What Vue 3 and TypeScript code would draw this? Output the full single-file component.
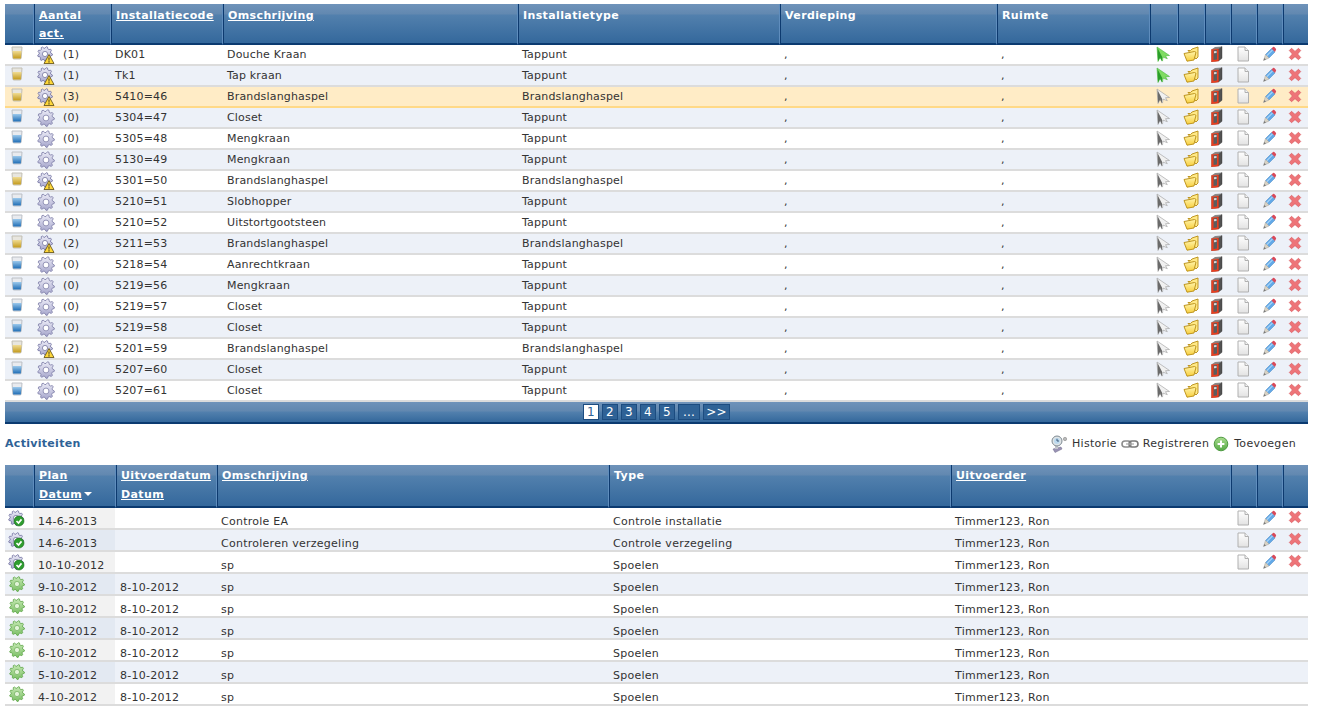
<script setup lang="ts">
interface InstRow { state: 'warn' | 'ok'; count: number; code: string; name: string; type: string; active?: boolean; selected?: boolean }
interface ActRow { done: boolean; plan: string; exec: string; name: string; type: string }

const instCols = [28, 77, 112, 295, 262, 217, 153, 28, 27, 26, 26, 26, 26]
const actCols = [28, 82, 101, 392, 342, 280, 26, 26, 26]

const T = 'Tappunt'
const B = 'Brandslanghaspel'
const installations: InstRow[] = [
  { state: 'warn', count: 1, code: 'DK01', name: 'Douche Kraan', type: T, active: true },
  { state: 'warn', count: 1, code: 'Tk1', name: 'Tap kraan', type: T, active: true },
  { state: 'warn', count: 3, code: '5410=46', name: B, type: B, selected: true },
  { state: 'ok', count: 0, code: '5304=47', name: 'Closet', type: T },
  { state: 'ok', count: 0, code: '5305=48', name: 'Mengkraan', type: T },
  { state: 'ok', count: 0, code: '5130=49', name: 'Mengkraan', type: T },
  { state: 'warn', count: 2, code: '5301=50', name: B, type: B },
  { state: 'ok', count: 0, code: '5210=51', name: 'Slobhopper', type: T },
  { state: 'ok', count: 0, code: '5210=52', name: 'Uitstortgootsteen', type: T },
  { state: 'warn', count: 2, code: '5211=53', name: B, type: B },
  { state: 'ok', count: 0, code: '5218=54', name: 'Aanrechtkraan', type: T },
  { state: 'ok', count: 0, code: '5219=56', name: 'Mengkraan', type: T },
  { state: 'ok', count: 0, code: '5219=57', name: 'Closet', type: T },
  { state: 'ok', count: 0, code: '5219=58', name: 'Closet', type: T },
  { state: 'warn', count: 2, code: '5201=59', name: B, type: B },
  { state: 'ok', count: 0, code: '5207=60', name: 'Closet', type: T },
  { state: 'ok', count: 0, code: '5207=61', name: 'Closet', type: T },
]

const activities: ActRow[] = [
  { done: false, plan: '14-6-2013', exec: '', name: 'Controle EA', type: 'Controle installatie' },
  { done: false, plan: '14-6-2013', exec: '', name: 'Controleren verzegeling', type: 'Controle verzegeling' },
  { done: false, plan: '10-10-2012', exec: '', name: 'sp', type: 'Spoelen' },
  { done: true, plan: '9-10-2012', exec: '8-10-2012', name: 'sp', type: 'Spoelen' },
  { done: true, plan: '8-10-2012', exec: '8-10-2012', name: 'sp', type: 'Spoelen' },
  { done: true, plan: '7-10-2012', exec: '8-10-2012', name: 'sp', type: 'Spoelen' },
  { done: true, plan: '6-10-2012', exec: '8-10-2012', name: 'sp', type: 'Spoelen' },
  { done: true, plan: '5-10-2012', exec: '8-10-2012', name: 'sp', type: 'Spoelen' },
  { done: true, plan: '4-10-2012', exec: '8-10-2012', name: 'sp', type: 'Spoelen' },
]

const pages = ['2', '3', '4', '5', '...', '>>']

function gearPath(cx: number, cy: number, outer: number, inner: number, teeth: number) {
  const pts: string[] = []
  for (let i = 0; i < teeth * 4; i++) {
    const a = (i / (teeth * 4)) * Math.PI * 2
    const r = i % 4 < 2 ? outer : inner
    pts.push(`${(cx + r * Math.cos(a)).toFixed(2)} ${(cy + r * Math.sin(a)).toFixed(2)}`)
  }
  return 'M' + pts.join('L') + 'Z'
}
const gear = gearPath(8, 8, 7.4, 5.8, 9)
</script>

<template>
  <div class="page">
    <svg class="sprite" width="0" height="0">
      <defs>
        <linearGradient id="gr-gear" x1="0" y1="0" x2="0" y2="1"><stop offset="0" stop-color="#ececf7" /><stop offset="1" stop-color="#a6a6cc" /></linearGradient>
        <linearGradient id="gr-green" x1="0" y1="0" x2="0" y2="1"><stop offset="0" stop-color="#c4e8b2" /><stop offset="1" stop-color="#7cc066" /></linearGradient>
        <linearGradient id="gr-folder" x1="0" y1="0" x2="0" y2="1"><stop offset="0" stop-color="#fff3a8" /><stop offset="1" stop-color="#f8cf3e" /></linearGradient>
        <linearGradient id="gr-doc" x1="0" y1="0" x2="0" y2="1"><stop offset="0" stop-color="#ffffff" /><stop offset="1" stop-color="#e2e2e2" /></linearGradient>
        <linearGradient id="gr-plus" x1="0" y1="0" x2="0" y2="1"><stop offset="0" stop-color="#a9dd8e" /><stop offset="1" stop-color="#55a845" /></linearGradient>
        <linearGradient id="gr-beer" x1="0" y1="0" x2="0" y2="1"><stop offset="0" stop-color="#f0dc94" /><stop offset="1" stop-color="#c39a1c" /></linearGradient>
        <linearGradient id="gr-water" x1="0" y1="0" x2="0" y2="1"><stop offset="0" stop-color="#9cc9ec" /><stop offset="1" stop-color="#1f6db5" /></linearGradient>
        <symbol id="i-glass-y" viewBox="0 0 12 14">
          <path d="M1 1h10l-.8 11a1.200 1.200 0 0 1-1.200 1H3a1.200 1.200 0 0 1-1.200-1z" fill="#e8e6df" stroke="#c2bfb4" />
          <path d="M1.500 5h9l-.7 7.500H2.200z" fill="url(#gr-beer)" />
        </symbol>
        <symbol id="i-glass-b" viewBox="0 0 12 14">
          <path d="M1 1h10l-.8 11a1.200 1.200 0 0 1-1.200 1H3a1.200 1.200 0 0 1-1.200-1z" fill="#e9ebef" stroke="#bcc0c6" />
          <path d="M1.500 5h9l-.7 7.500H2.200z" fill="url(#gr-water)" />
        </symbol>
        <symbol id="i-gear" viewBox="0 0 16 16">
          <path :d="gear" fill="url(#gr-gear)" stroke="#8585ad" stroke-width=".8" />
          <circle cx="8" cy="8" r="2.600" fill="#fff" stroke="#8a8ab0" stroke-width=".8" />
        </symbol>
        <symbol id="i-gear-warn" viewBox="0 0 18 18">
          <path :d="gear" fill="url(#gr-gear)" stroke="#7070a0" stroke-width=".8" />
          <circle cx="8" cy="8" r="2.600" fill="#fff" stroke="#7878a0" stroke-width=".8" />
          <path d="M12 8.500l5 9H7z" fill="#ffd83a" stroke="#5a4a10" stroke-width=".8" stroke-linejoin="round" />
          <path d="M11.500 11.500h1l-.2 3.200h-.6zM11.500 15.300h1v1.200h-1z" fill="#222" />
        </symbol>
        <symbol id="i-gear-check" viewBox="0 0 18 18">
          <path :d="gear" fill="url(#gr-gear)" stroke="#7070a0" stroke-width=".8" />
          <circle cx="8" cy="8" r="2.600" fill="#fff" stroke="#7878a0" stroke-width=".8" />
          <circle cx="11" cy="11" r="5" fill="#2f9e2f" stroke="#14661a" stroke-width=".6" />
          <path d="M8.500 11l2 2 3-3.600" fill="none" stroke="#fff" stroke-width="1.700" />
        </symbol>
        <symbol id="i-gear-green" viewBox="0 0 16 16">
          <path :d="gear" fill="url(#gr-green)" stroke="#5da548" stroke-width=".8" />
          <circle cx="8" cy="8" r="2.600" fill="#e2f4d8" stroke="#6fae5a" stroke-width=".7" />
        </symbol>
        <symbol id="i-arrow-g" viewBox="0 0 16 16">
          <path d="M2 1l12.500 8.500-4 .2 1.800 3-4.300-1.600-.5 4-2.500-3.500L3 15.500z" fill="#7fdc62" stroke="#4cb540" stroke-width=".6" stroke-linejoin="round" />
          <path d="M2.500 2l.5 13 2.200-3.500 1.500 3.900.5-4.300z" fill="#2a9e2a" />
        </symbol>
        <symbol id="i-arrow-k" viewBox="0 0 16 16">
          <path d="M2 1l12.500 8.500-4 .2 1.800 3-4.300-1.600-.5 4-2.500-3.500L3 15.500z" fill="#f1f1f1" stroke="#9a9a9a" stroke-width=".6" stroke-linejoin="round" />
          <path d="M2.500 2l.5 13 2.200-3.500 1.500 3.900.5-4.300z" fill="#6a6a6a" />
        </symbol>
        <symbol id="i-folder" viewBox="0 0 16 16">
          <path d="M5 4.500h2.500L9 3l6-2v10l-2 2z" fill="#ffe987" stroke="#b88c12" stroke-width=".9" stroke-linejoin="round" />
          <path d="M1 7.500l10.500-2 1.500.8L11 14l-7 1.200z" fill="url(#gr-folder)" stroke="#b88c12" stroke-width=".9" stroke-linejoin="round" />
        </symbol>
        <symbol id="i-binder" viewBox="0 0 16 16">
          <path d="M2.500 3.500L6 1l7-.5L9.500 3z" fill="#8a8a8a" />
          <path d="M9.500 3L13 .5v11.800L9.500 15z" fill="#525252" stroke="#333" stroke-width=".4" />
          <path d="M2.500 3.500l7-.5v12l-7 1z" fill="#ea3f20" stroke="#b02e14" stroke-width=".5" />
          <path d="M4.500 4.300l3.500-.3v9.600l-3.500.4z" fill="#5c5c5c" />
          <path d="M5 5.300l2.500-.2v2l-2.500.2z" fill="#d8d8d8" />
        </symbol>
        <symbol id="i-doc" viewBox="0 0 16 16">
          <path d="M3 1h7l3.500 3.500V15H3z" fill="url(#gr-doc)" stroke="#b0b0b0" />
          <path d="M10 1v3.500h3.500" fill="#f4f4f4" stroke="#b0b0b0" />
        </symbol>
        <symbol id="i-pencil" viewBox="0 0 16 16">
          <path d="M4.500 8.500l6-6L14 6l-6 6z" fill="#62a9e8" stroke="#4a86c0" stroke-width=".5" />
          <path d="M5.500 10l6-6" stroke="#a8d4f7" stroke-width="1.200" />
          <path d="M10.500 2.500l1.500-1.400a1 1 0 0 1 1.300 0l1.600 1.600a1 1 0 0 1 0 1.300L14 6z" fill="#d84a5a" />
          <path d="M4.500 8.500L8 12l-5.500 2.500z" fill="#d9d3c4" stroke="#a0a0a0" stroke-width=".5" />
          <path d="M2.500 14.500l.8-2.500 1.700 1.400z" fill="#777" />
        </symbol>
        <symbol id="i-x" viewBox="0 0 16 16">
          <path d="M4 1.500L8 5l4-3.500L14.500 4 11 8l3.500 4-2.500 2.500L8 11l-4 3.500L1.500 12 5 8 1.500 4z" fill="#ee7478" stroke="#d95a60" stroke-width=".8" stroke-linejoin="round" />
        </symbol>
        <symbol id="i-history" viewBox="0 0 18 18">
          <path d="M3 14l8-2 1 2-7 3.500z" fill="#9a93b5" stroke="#6e6a8a" stroke-width=".5" />
          <path d="M5 9v5h3V9z" fill="#c3c5cc" />
          <circle cx="7" cy="6" r="5" fill="#dfe4e6" stroke="#7e8a92" />
          <circle cx="7" cy="6" r="3" fill="#bcd9ee" />
          <path d="M7 3.800V6h2" stroke="#3f5a7a" fill="none" />
          <circle cx="15" cy="4" r="1.700" fill="#b9b9b9" stroke="#7e7e7e" stroke-width=".5" />
        </symbol>
        <symbol id="i-link" viewBox="0 0 18 10">
          <rect x="1" y="2" width="9" height="6" rx="3" fill="none" stroke="#8d8d8d" stroke-width="1.600" />
          <rect x="8" y="2" width="9" height="6" rx="3" fill="none" stroke="#7a7a7a" stroke-width="1.600" />
          <path d="M5 5h8" stroke="#a8a8a8" stroke-width="1.200" />
        </symbol>
        <symbol id="i-plus" viewBox="0 0 16 16">
          <circle cx="8" cy="8" r="6.800" fill="url(#gr-plus)" stroke="#4f9b42" />
          <path d="M8 4.600v6.800M4.600 8h6.800" stroke="#fff" stroke-width="2" />
        </symbol>
      </defs>
    </svg>

    <table class="grid inst">
      <colgroup><col v-for="(w, i) in instCols" :key="i" :style="{ width: w + 'px' }" /></colgroup>
      <thead>
        <tr>
          <th></th>
          <th><a>Aantal act.</a></th>
          <th><a>Installatiecode</a></th>
          <th><a>Omschrijving</a></th>
          <th>Installatietype</th>
          <th>Verdieping</th>
          <th>Ruimte</th>
          <th v-for="n in 6" :key="n"></th>
        </tr>
      </thead>
      <tbody>
        <tr v-for="(r, i) in installations" :key="i" :class="{ alt: i % 2 === 1, selected: r.selected }">
          <td class="ic glass"><svg class="glass-ic"><use :href="r.state === 'warn' ? '#i-glass-y' : '#i-glass-b'" /></svg></td>
          <td>
            <div class="count">
              <svg class="i18"><use :href="r.state === 'warn' ? '#i-gear-warn' : '#i-gear'" /></svg>
              <span>({{ r.count }})</span>
            </div>
          </td>
          <td>{{ r.code }}</td>
          <td>{{ r.name }}</td>
          <td>{{ r.type }}</td>
          <td>,</td>
          <td>,</td>
          <td class="ic tool"><svg class="i16"><use :href="r.active ? '#i-arrow-g' : '#i-arrow-k'" /></svg></td>
          <td class="ic tool"><svg class="i16"><use href="#i-folder" /></svg></td>
          <td class="ic tool"><svg class="i16"><use href="#i-binder" /></svg></td>
          <td class="ic tool"><svg class="i16"><use href="#i-doc" /></svg></td>
          <td class="ic tool"><svg class="i16"><use href="#i-pencil" /></svg></td>
          <td class="ic tool"><svg class="i14"><use href="#i-x" /></svg></td>
        </tr>
      </tbody>
    </table>
    <div class="pager">
      <span class="pg current">1</span>
      <span v-for="p in pages" :key="p" class="pg" :class="{ wide: p.length > 1 }">{{ p }}</span>
    </div>

    <div class="section-head">
      <strong>Activiteiten</strong>
      <div class="actions">
        <span class="action"><svg class="i18"><use href="#i-history" /></svg>Historie</span>
        <span class="action"><svg class="link"><use href="#i-link" /></svg>Registreren</span>
        <span class="action"><svg class="i16 plus"><use href="#i-plus" /></svg>Toevoegen</span>
      </div>
    </div>

    <table class="grid act">
      <colgroup><col v-for="(w, i) in actCols" :key="i" :style="{ width: w + 'px' }" /></colgroup>
      <thead>
        <tr>
          <th></th>
          <th><a>Plan</a><br /><a>Datum</a><span class="sort"></span></th>
          <th><a>Uitvoerdatum</a><br /><a>Datum</a></th>
          <th><a>Omschrijving</a></th>
          <th>Type</th>
          <th><a>Uitvoerder</a></th>
          <th v-for="n in 3" :key="n"></th>
        </tr>
      </thead>
      <tbody>
        <tr v-for="(r, i) in activities" :key="i" :class="{ alt: i % 2 === 1 }">
          <td class="ic state">
            <svg v-if="r.done" class="i16"><use href="#i-gear-green" /></svg>
            <svg v-else class="i18"><use href="#i-gear-check" /></svg>
          </td>
          <td class="plan">{{ r.plan }}</td>
          <td>{{ r.exec }}</td>
          <td>{{ r.name }}</td>
          <td>{{ r.type }}</td>
          <td>Timmer123, Ron</td>
          <td class="ic up"><svg v-if="!r.done" class="i16"><use href="#i-doc" /></svg></td>
          <td class="ic up"><svg v-if="!r.done" class="i16"><use href="#i-pencil" /></svg></td>
          <td class="ic up"><svg v-if="!r.done" class="i14"><use href="#i-x" /></svg></td>
        </tr>
      </tbody>
    </table>
  </div>
</template>

<style scoped>
.page {
  width: 1303px;
  height: 704px;
  padding: 4px 0 0 5px;
  overflow: hidden;
  font-family: "DejaVu Sans", Verdana, sans-serif;
  font-size: 11px;
  letter-spacing: 0.17px;
  color: #333;
}
.sprite {
  position: absolute;
}
.grid {
  width: 1303px;
  table-layout: fixed;
  border-collapse: separate;
  border-spacing: 0;
}
.grid th {
  height: 35px;
  padding: 3px 0 0 5px;
  box-sizing: content-box;
  text-align: left;
  vertical-align: top;
  font-weight: bold;
  letter-spacing: 0.38px;
  line-height: 18px;
  color: #fff;
  background: linear-gradient(#6f93ba 0, #6288b0 10px, #5280ad 11px, #34689c 100%);
  border-bottom: 2px solid #0b3a70;
  border-left: 1px solid #5f8dbd;
  box-shadow: inset 1px 0 0 #0d3a6f;
}
.grid th:first-child {
  border-left: 0;
  box-shadow: none;
}
.grid th a {
  text-decoration: underline;
}
.grid td {
  height: 19px;
  padding: 0 0 0 5px;
  background: #fff;
  border-bottom: 2px solid #dcdcdc;
  white-space: nowrap;
  line-height: 19px;
}
.grid tr.alt td {
  background: #edf1f8;
}
.grid tr.selected td {
  background: #ffecc6;
  border-bottom-color: #ffd987;
}
.grid td.ic {
  padding: 0;
  text-align: center;
  line-height: 0;
}
.grid td.glass {
  padding-right: 5px;
  vertical-align: top;
}
.grid svg {
  display: inline-block;
  vertical-align: middle;
}
.grid td.tool svg {
  margin-top: -2px;
}
.glass-ic {
  width: 12px;
  height: 14px;
  margin-top: 1px;
}
.i14 {
  width: 14px;
  height: 14px;
}
.i16 {
  width: 16px;
  height: 16px;
}
.i18 {
  width: 18px;
  height: 18px;
}
.link {
  width: 18px;
  height: 10px;
}
.count {
  display: flex;
  align-items: center;
  gap: 8px;
  height: 19px;
  margin-left: -1px;
}
.pager {
  display: flex;
  justify-content: center;
  align-items: center;
  gap: 3px;
  height: 20px;
  background: linear-gradient(#6f93ba 0, #6288b0 9px, #5280ad 10px, #34689c 100%);
  border-bottom: 2px solid #0b3a70;
}
.pg {
  display: block;
  width: 14px;
  height: 14px;
  line-height: 14px;
  font-size: 12px;
  text-align: center;
  color: #fff;
  background: #2f6296;
  border: 1px solid #1c4c80;
}
.pg.wide {
  width: 20px;
}
.pg:last-child {
  width: 25px;
}
.pg.current {
  background: #fff;
  color: #2f6296;
}
.section-head {
  display: flex;
  justify-content: space-between;
  align-items: center;
  height: 39px;
  padding-bottom: 2px;
  color: #2f6296;
}
.section-head strong {
  font-weight: bold;
  letter-spacing: 0.3px;
}
.actions {
  display: flex;
  gap: 4px;
  padding-right: 12px;
  color: #333;
  letter-spacing: 0.3px;
}
.action {
  display: flex;
  align-items: center;
  gap: 4px;
}
.plus {
  margin-right: 1px;
}
.act th {
  height: 40px;
  padding-top: 1px;
  line-height: 19px;
}
.act td {
  height: 13px;
  padding-top: 7px;
  line-height: 13px;
  vertical-align: top;
  letter-spacing: 0.26px;
}
.act td.ic {
  vertical-align: top;
  padding-top: 0;
  height: 20px;
}
.act td.state {
  padding-right: 4px;
}
.act td.state svg {
  margin-top: 2px;
}
.act td.up svg {
  margin-top: 2px;
}
.act td.plan {
  background: #f2f2f2;
}
.act tr.alt td.plan {
  background: #e3e9f2;
}
.sort {
  display: inline-block;
  margin-left: 2px;
  vertical-align: 2px;
  border-left: 4px solid transparent;
  border-right: 4px solid transparent;
  border-top: 4px solid #fff;
}
</style>

<style>
html,
body {
  margin: 0;
  background: #fff;
  overflow: hidden;
}
</style>
